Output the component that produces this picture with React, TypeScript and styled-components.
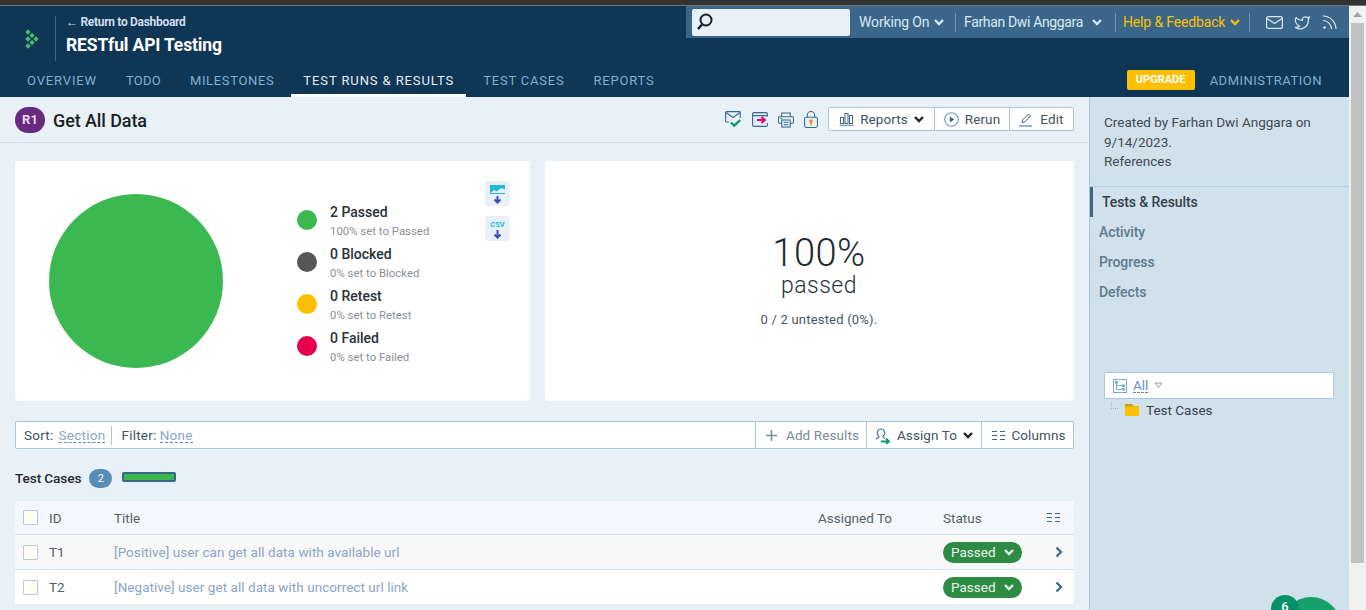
import React from "react";
import styled, { createGlobalStyle } from "styled-components";

const Global = createGlobalStyle`
  html, body { margin: 0; padding: 0; height: 100%; overflow: hidden; }
  body { font-family: Roboto, "Noto Sans", sans-serif; background: #e8f0f8; }
  * { box-sizing: border-box; }
`;

const Shell = styled.div`
  width: 1366px; height: 610px; overflow: hidden; position: relative;
  display: flex; flex-direction: column;
`;
const BrowserStrip = styled.div`
  height: 6px; flex: none; background: #333334; border-bottom: 1px solid #6c7278;
`;
const Viewport = styled.div`display: flex; flex: 1; min-height: 0;`;
const Page = styled.div`flex: 1; min-width: 0; display: flex; flex-direction: column;`;
const ScrollTrack = styled.div`
  width: 17px; flex: none; background: #f1f1f1; padding: 0 2px 47px;
  display: flex; flex-direction: column;
`;
const ScrollArrow = styled.div`height: 17px; flex: none; display: flex; align-items: center; justify-content: center;`;
const ScrollThumb = styled.div`flex: 1; background: #c1c1c1;`;

const Header = styled.header`
  height: 91px; flex: none; background: #0f3654; display: flex; flex-direction: column;
`;
const HeaderTop = styled.div`flex: 1; display: flex; justify-content: space-between; align-items: flex-start;`;
const Brand = styled.div`display: flex; align-items: center; padding: 10px 0 0 25px;`;
const BrandRule = styled.div`width: 1px; height: 45px; background: #3c6580; margin: 0 10px 0 16px;`;
const BrandText = styled.div`display: flex; flex-direction: column; gap: 6px; margin-top: -7px;`;
const BackLink = styled.div`font-size: 12px; font-weight: 700; letter-spacing: -0.3px; line-height: 14px; color: #cfdcec;`;
const Project = styled.div`font-size: 17.5px; font-weight: 700; letter-spacing: -0.15px; line-height: 20px; color: #fff;`;

const UtilityBar = styled.div`
  width: 663px; height: 32px; background: #3a6789; display: flex; align-items: center; padding: 0 0 0 6px;
`;
const SearchBox = styled.div`
  width: 158px; height: 27px; background: #e9f1f8; border-radius: 2px; display: flex; align-items: center; padding-left: 3px; margin-right: 9px; color: #15202b;
`;
const UtilLink = styled.div<{ $c?: string; $gap?: number; $w: number; $ls?: number }>`
  display: flex; align-items: center; gap: ${p => p.$gap ?? 5}px; width: ${p => p.$w}px; font-size: 14px; letter-spacing: ${p => p.$ls ?? -0.15}px;
  color: ${p => p.$c ?? "#dbe7f2"}; white-space: nowrap;
`;
const UtilRule = styled.div<{ $m: number }>`width: 1px; height: 19px; background: #6e93ae; margin: 0 ${p => p.$m}px 0 0;`;
const UtilIcons = styled.div`display: flex; align-items: center; gap: 11px; margin-left: 16px; color: #dbe7f2;`;

const NavRow = styled.nav`height: 35px; flex: none; display: flex; align-items: stretch; padding-left: 15px; gap: 5px;`;
const NavItem = styled.div<{ $active?: boolean; $ls: number }>`
  display: flex; align-items: center; padding: 4px 12px 0; font-size: 13px; letter-spacing: ${p => p.$ls}px;
  color: ${p => p.$active ? "#e6eef6" : "#82aed0"}; white-space: nowrap;
  border-bottom: 3px solid ${p => p.$active ? "#fff" : "transparent"};
`;
const NavRight = styled.div`margin-left: auto; display: flex; align-items: center; padding: 3px 27px 3px 0;`;
const Upgrade = styled.div`
  width: 68px; flex: none; height: 20px; background: #fcc000; border-radius: 2px; color: #fff; font-size: 11px; font-weight: 700;
  display: flex; align-items: center; justify-content: center; margin-right: 15px;
`;
const AdminLink = styled.div`font-size: 13px; letter-spacing: 0.5px; color: #82aed0; white-space: nowrap; padding-top: 2px;`;

const Body = styled.div`flex: 1; display: flex; min-height: 0;`;
const Content = styled.main`flex: 1; min-width: 0; background: #e8f0f8; display: flex; flex-direction: column;`;

const TitleBar = styled.div`
  height: 46px; flex: none; padding: 0 15px; display: flex; align-items: center; border-bottom: 1px solid #d0e0ec;
`;
const RunBadge = styled.div`
  width: 30px; height: 26px; border-radius: 13px; background: #682a7f; color: #e8dcee; font-size: 13px; font-weight: 700; display: flex; align-items: center; justify-content: center; margin-right: 8px;
`;
const RunTitle = styled.h1`margin: 1px 0 0; font-size: 18px; font-weight: 500; color: #1b1f24; letter-spacing: -0.1px;`;
const ActionIcons = styled.div`margin-left: auto; display: flex; align-items: center; gap: 10px; margin-right: 10px;`;

const ButtonGroup = styled.div`
  display: flex; background: #fff; border: 1px solid #a9c8e0; border-radius: 2px; height: 24px; margin-bottom: 1px;
`;
const GroupButton = styled.div<{ $w?: number; $muted?: boolean; $pl?: number; $gap?: number }>`
  display: flex; align-items: center; justify-content: center; gap: ${p => p.$gap ?? 6}px; font-size: 13.5px; letter-spacing: 0.1px;
  padding-left: ${p => p.$pl ?? 0}px;
  color: ${p => p.$muted ? "#7d8c99" : "#44525f"}; ${p => p.$w ? `width: ${p.$w}px;` : ""} white-space: nowrap;
  & + & { border-left: 1px solid #a9c8e0; }
`;

const Cards = styled.div`display: flex; gap: 15px; padding: 18px 15px 0; height: 258px; flex: none;`;
const ChartCard = styled.section`
  width: 515px; height: 240px; background: #fff; border-radius: 3px; display: flex; align-items: flex-start; padding: 20px 20px 0 34px;
`;
const Pie = styled.div`width: 174px; height: 174px; border-radius: 50%; background: #3cb850; margin: 13px 74px 0 0; flex: none;`;
const Legend = styled.div`display: flex; flex-direction: column; padding-top: 22px; flex: 1;`;
const LegendRow = styled.div`display: flex; align-items: flex-start; gap: 13px; height: 42px;`;
const Dot = styled.div<{ $c: string }>`width: 20px; height: 20px; border-radius: 50%; background: ${p => p.$c}; flex: none; margin-top: 7px;`;
const LegendText = styled.div`display: flex; flex-direction: column;`;
const LegendTitle = styled.div`font-size: 14px; font-weight: 500; color: #2a3037; line-height: 19px;`;
const LegendSub = styled.div`font-size: 11.4px; color: #8b8f95; line-height: 18px;`;
const Exports = styled.div`display: flex; flex-direction: column; gap: 10px;`;
const ExportBtn = styled.div`width: 25px; height: 25px; background: #e8f0f8; border-radius: 3px; display: flex;`;

const SummaryCard = styled.section`
  flex: 1; height: 240px; background: #fff; border-radius: 3px; display: flex; flex-direction: column; align-items: center; padding: 71px 0 0 19px;
`;
const Percent = styled.div`font-size: 38px; font-weight: 300; color: #1f2a33; line-height: 42px; letter-spacing: 0.5px;`;
const Passed = styled.div`font-size: 23px; font-weight: 300; color: #2b343c; line-height: 23px; letter-spacing: 0.5px;`;
const Untested = styled.div`font-size: 13px; color: #4a5560; line-height: 18px; margin-top: 14px; letter-spacing: 0.2px;`;

const Toolbar = styled.div`
  margin: 20px 15px 0; height: 28px; flex: none; background: #fff; border: 1px solid #a9c8e0; border-radius: 2px; display: flex; align-items: stretch;
  font-size: 13.5px; color: #44525f;
`;
const ToolFilters = styled.div`flex: 1; display: flex; align-items: center; padding-left: 8px; letter-spacing: 0.25px;`;
const ToolSep = styled.div`width: 1px; height: 19px; background: #a9c8e0; margin: 0 9px 0 6px;`;
const DashLink = styled.span<{ $c?: string; $ml?: number }>`
  color: ${p => p.$c ?? "#8aa6c8"}; border-bottom: 1px dashed #5a8bb5; margin-left: ${p => p.$ml ?? 5}px; line-height: 14px;
`;
const ToolButton = styled(GroupButton)`height: 100%; border-left: 1px solid #a9c8e0;`;

const SectionHead = styled.div`height: 52px; flex: none; margin: 0 15px; display: flex; align-items: center; padding-top: 6px;`;
const SectionTitle = styled.div`font-size: 13.6px; font-weight: 500; color: #1f2a33; letter-spacing: -0.1px;`;
const CountBadge = styled.div`
  width: 23px; height: 19px; border-radius: 10px; background: #568db5; color: #fff; font-size: 11px; display: flex; align-items: center; justify-content: center; margin: 0 10px 0 8px;
`;
const Progress = styled.div`width: 54px; height: 10px; background: #3cb850; border: 2px solid #3a6789; border-radius: 2px; margin-bottom: 2px;`;

const Table = styled.div`margin: 0 15px; border-radius: 3px; overflow: hidden; background: #fff; flex: none;`;
const Row = styled.div<{ $bg: string; $h: number }>`
  display: grid; grid-template-columns: 26px 65px 704px 125px 103px 1fr; align-items: center; height: ${p => p.$h}px;
  padding-left: 8px; background: ${p => p.$bg}; border-bottom: 1px solid #cfdfeb; font-size: 13.5px; color: #555f69;
  &:last-child { border-bottom: none; }
`;
const Check = styled.div`width: 15px; height: 15px; border: 1px solid #b6c6ea; background: #fffff2; border-radius: 1px;`;
const CaseLink = styled.div`color: #8aa6c8; white-space: nowrap; letter-spacing: 0.05px;`;
const Pill = styled.div`
  width: 79px; height: 21px; border-radius: 11px; background: #2e8b44; color: #e9f5ec; display: flex; align-items: center; gap: 8px; padding-left: 8px; font-size: 13.5px;
`;
const RowEnd = styled.div<{ $pl: number }>`padding-left: ${p => p.$pl}px; display: flex; align-items: center; color: #3a6789;`;

const Sidebar = styled.aside`
  width: 260px; flex: none; background: #d1e1ec; border-left: 1px solid #a9c8e0; display: flex; flex-direction: column; position: relative;
`;
const Meta = styled.div`
  height: 90px; flex: none; padding: 16px 14px 0 14px; font-size: 13.5px; line-height: 19.5px; color: #3f4a55; border-bottom: 1px solid #b4cde0;
`;
const SideNav = styled.div`display: flex; flex-direction: column;`;
const SideItem = styled.div<{ $active?: boolean }>`
  height: 30px; display: flex; align-items: center; font-size: 14px; font-weight: 500; letter-spacing: -0.1px;
  padding-left: 9px; color: ${p => p.$active ? "#33404c" : "#60798c"};
  border-left: ${p => p.$active ? "3px solid #3a6789" : "none"};
`;
const FilterBox = styled.div`
  margin: 65px 15px 0 14px; height: 27px; background: #fff; border: 1px solid #a9c8e0; border-radius: 1px;
  display: flex; align-items: center; padding-left: 8px; gap: 6px; font-size: 13.5px;
`;
const TreeRow = styled.div`display: flex; align-items: center; margin: 3px 0 0 21px; font-size: 13.5px; color: #36424d; gap: 7px;`;
const TreeElbow = styled.div`width: 7px; height: 7px; border-left: 1px dotted #a5b5c2; border-bottom: 1px dotted #a5b5c2; margin-top: -9px;`;

const ChatBubble = styled.div`
  position: absolute; left: 191px; top: 500px; width: 60px; height: 60px; border-radius: 50%; background: #17a06c;
`;
const ChatCount = styled.div`
  position: absolute; left: 181px; top: 498px; width: 28px; height: 28px; border-radius: 50%; background: #07916a; color: #fff; font-size: 13px; font-weight: 500; text-align: center; line-height: 23px;
`;

const Chevron = ({ c = "currentColor", s = 10, w = 2.4 }: { c?: string; s?: number; w?: number }) => (
  <svg width={s} height={s * 0.7} viewBox="0 0 10 7" fill="none" stroke={c} strokeWidth={w}><path d="M1 1l4 4 4-4" /></svg>
);
const Logo = () => (
  <svg width="14" height="20" viewBox="0 0 14 20" fill="#4fb872">
    {[[3, 3], [7, 6.5], [3, 10], [11, 10], [7, 13.5], [3, 17]].map(([x, y]) => (
      <path key={`${x}-${y}`} d={`M${x} ${y - 2.7}l2.700 2.700-2.700 2.700-2.700-2.700z`} />
    ))}
  </svg>
);
const SearchIcon = () => (
  <svg width="20" height="20" viewBox="0 0 20 20" fill="none" stroke="currentColor" strokeWidth="2"><circle cx="11" cy="8" r="5.500" /><path d="M7 12.500L3 17" strokeWidth="2.600" /></svg>
);
const MailIcon = () => (
  <svg width="17" height="13" viewBox="0 0 17 13" fill="none" stroke="currentColor" strokeWidth="1.200"><rect x=".6" y=".6" width="15.800" height="11.800" rx="2" /><path d="M1 2.500l7.500 5 7.500-5" /></svg>
);
const TwitterIcon = () => (
  <svg width="17" height="17" viewBox="0 0 24 24" fill="none" stroke="currentColor" strokeWidth="1.700" strokeLinejoin="round"><path d="M22 4s-.7 2.100-2 3.400c1.600 10-9.400 17.300-18 11.600 2.200.1 4.400-.6 6-2C3 15.500.5 9.600 3 5c2.200 2.600 5.600 4.100 9 4-.9-4.200 4-6.600 7-3.800 1.100 0 3-1.200 3-1.200z" /></svg>
);
const RssIcon = () => (
  <svg width="15" height="15" viewBox="0 0 15 15" fill="none" stroke="currentColor" strokeWidth="1.200"><path d="M1 5.500c4.500 0 8.500 4 8.500 8.500M1 1c7 0 13 6 13 13" /><circle cx="2.500" cy="12.500" r="1.300" fill="currentColor" stroke="none" /></svg>
);
const MailCheck = () => (
  <svg width="17" height="17" viewBox="0 0 17 17" fill="none"><path d="M4 11H1.500A.9.900 0 0 1 .6 10V1.500A.9.900 0 0 1 1.500.6h12.800a.9.900 0 0 1 .9.900V7" stroke="#3a6789" strokeWidth="1.100" /><path d="M1 1.500l7 5 7-5" stroke="#3a6789" strokeWidth="1.100" /><path d="M6 11.500l3.200 3.200 6-5.500" stroke="#0c9a6e" strokeWidth="2.400" /></svg>
);
const ExportIcon = () => (
  <svg width="16" height="15" viewBox="0 0 16 15" fill="none"><path d="M15.400 4.500V2A1.400 1.400 0 0 0 14 .6H2A1.400 1.400 0 0 0 .6 2v11A1.400 1.400 0 0 0 2 14.400h12a1.400 1.400 0 0 0 1.400-1.400v-2M.6 3.600h14.800" stroke="#3a6789" strokeWidth="1.100" /><path d="M5 8h8M9.500 5l3.500 3-3.500 3" stroke="#e6007e" strokeWidth="2" /></svg>
);
const PrintIcon = () => (
  <svg width="16" height="16" viewBox="0 0 17 17" fill="none" stroke="#3a6789" strokeWidth="1.100"><path d="M4 5V1h9v4M4 12H1.500A1 1 0 0 1 .6 11V6a1 1 0 0 1 1-1h13.800a1 1 0 0 1 1 1v5a1 1 0 0 1-1 1H13" /><rect x="4" y="8.500" width="9" height="7.500" /><path d="M6 11h5M6 13.500h5" /><path d="M2.500 7h2" stroke="#0c9a6e" /></svg>
);
const LockIcon = () => (
  <svg width="14" height="17" viewBox="0 0 15 18" fill="none"><rect x=".6" y="6.500" width="13.800" height="11" rx="2" stroke="#3a6789" strokeWidth="1.100" /><path d="M3.500 6.500V4.500a4 4 0 0 1 8 0v2" stroke="#3a6789" strokeWidth="1.100" /><circle cx="7.500" cy="10.500" r="1.900" fill="#f28a16" /><rect x="6.600" y="10.500" width="1.800" height="4.500" fill="#f28a16" /></svg>
);
const BarsIcon = () => (
  <svg width="15" height="14" viewBox="0 0 15 14" fill="none" stroke="#3a6789"><rect x="1.500" y="5.500" width="3" height="6" /><rect x="6" y="1.500" width="3" height="10" /><rect x="10.500" y="3.500" width="3" height="8" /><path d="M.5 13.500h14" stroke="#6d9cc0" strokeWidth="1.500" /></svg>
);
const PlayIcon = () => (
  <svg width="15" height="15" viewBox="0 0 15 15"><circle cx="7.500" cy="7.500" r="6.800" fill="none" stroke="#6d9cc0" strokeWidth="1.100" /><path d="M5.800 4.500l4.500 3-4.500 3z" fill="#3a6789" /></svg>
);
const EditIcon = () => (
  <svg width="15" height="15" viewBox="0 0 15 15" fill="none"><path d="M3 10.500l.5-2.500L9.500 2l2 2-6 6z" stroke="#3a6789" strokeWidth="1" /><path d="M0 14h13" stroke="#6d9cc0" strokeWidth="1.500" /></svg>
);
const ColumnsIcon = () => (
  <svg width="13" height="11" viewBox="0 0 13 11" stroke="#3a6789" strokeWidth="1"><path d="M0 1.500h5M0 5.500h5M0 9.500h5M8 1.500h5M8 5.500h5M8 9.500h5" /></svg>
);
const PlusIcon = () => (
  <svg width="11" height="11" viewBox="0 0 11 11" stroke="#7d8c99" strokeWidth="1.500"><path d="M5.500 0v11M0 5.500h11" /></svg>
);
const AssignIcon = () => (
  <svg width="16" height="17" viewBox="0 0 16 17" fill="none"><path d="M1 12c1-1 3-1 3-2.500C2 8 2 5.500 3 3.500 4 1.500 8 1.500 9 3.500c1 2 .8 4.500-1.200 6 0 1 1.200 1.500 2.200 2" stroke="#3a6789" strokeWidth="1.100" /><path d="M6 14.500h8M11 11.500l3 3-3 2.500" stroke="#0c9a6e" strokeWidth="1.800" /></svg>
);
const ChartExport = () => (
  <svg width="25" height="25" viewBox="0 0 25 25"><rect x="5" y="4" width="15" height="9" fill="#22b8d8" /><path d="M5.500 12l3.500-3 2.500 1.500L16 7l4 1.500V12z" fill="#e8f0f8" /><path d="M12.500 15v6M9.500 18.500l3 3 3-3" stroke="#3d4db0" strokeWidth="2" fill="none" /></svg>
);
const CsvExport = () => (
  <svg width="25" height="25" viewBox="0 0 25 25"><text x="12.500" y="11" fontSize="7.500" fontWeight="700" textAnchor="middle" fill="#22b8d8" fontFamily="Roboto">CSV</text><path d="M12.500 14v7M9.500 18.500l3 3 3-3" stroke="#3d4db0" strokeWidth="2" fill="none" /></svg>
);
const TreeIcon = () => (
  <svg width="14" height="14" viewBox="0 0 14 14" fill="none"><rect x=".5" y=".5" width="13" height="13" stroke="#7fa9c8" /><path d="M3.500 3v7.500H8M3.500 6.500H8" stroke="#7fa9c8" /><path d="M2 2h3v2.500H2zM8.500 5.500H12V8H8.500zM8.500 9H12v2.500H8.500z" fill="#7fa9c8" /></svg>
);
const FolderIcon = () => (
  <svg width="14" height="12" viewBox="0 0 14 12"><path d="M0 0h7l1.500 2H14v1H0z" fill="#c99f00" /><rect y="2.500" width="14" height="9.500" fill="#fcc000" /></svg>
);

const navItems = [
  { t: "OVERVIEW", ls: 0.85 },
  { t: "TODO", ls: 0.25 },
  { t: "MILESTONES", ls: 0.65 },
  { t: "TEST RUNS & RESULTS", ls: 0.9, active: true },
  { t: "TEST CASES", ls: 0.8 },
  { t: "REPORTS", ls: 0.8 },
];
const legend = [
  { c: "#3cb850", n: "2 Passed", s: "100% set to Passed" },
  { c: "#565656", n: "0 Blocked", s: "0% set to Blocked" },
  { c: "#fcc000", n: "0 Retest", s: "0% set to Retest" },
  { c: "#e6004c", n: "0 Failed", s: "0% set to Failed" },
];
const cases = [
  { id: "T1", t: "[Positive] user can get all data with available url", bg: "#f8f8f8", h: 35 },
  { id: "T2", t: "[Negative] user get all data with uncorrect url link", bg: "#fff", h: 34 },
];

export default function App() {
  return (
    <Shell>
      <Global />
      <BrowserStrip />
      <Viewport>
        <Page>
          <Header>
            <HeaderTop>
              <Brand>
                <Logo />
                <BrandRule />
                <BrandText>
                  <BackLink>← Return to Dashboard</BackLink>
                  <Project>RESTful API Testing</Project>
                </BrandText>
              </Brand>
              <UtilityBar>
                <SearchBox><SearchIcon /></SearchBox>
                <UtilLink $w={96}>Working On <Chevron /></UtilLink>
                <UtilRule $m={8} />
                <UtilLink $w={151} $gap={9} $ls={-0.35}>Farhan Dwi Anggara <Chevron /></UtilLink>
                <UtilRule $m={7} />
                <UtilLink $c="#fcc000" $w={126}>Help &amp; Feedback <Chevron /></UtilLink>
                <UtilRule $m={0} />
                <UtilIcons><MailIcon /><TwitterIcon /><RssIcon /></UtilIcons>
              </UtilityBar>
            </HeaderTop>
            <NavRow>
              {navItems.map(n => <NavItem key={n.t} $ls={n.ls} $active={n.active}>{n.t}</NavItem>)}
              <NavRight>
                <Upgrade>UPGRADE</Upgrade>
                <AdminLink>ADMINISTRATION</AdminLink>
              </NavRight>
            </NavRow>
          </Header>
          <Body>
            <Content>
              <TitleBar>
                <RunBadge>R1</RunBadge>
                <RunTitle>Get All Data</RunTitle>
                <ActionIcons><MailCheck /><ExportIcon /><PrintIcon /><LockIcon /></ActionIcons>
                <ButtonGroup>
                  <GroupButton $w={105}><BarsIcon />Reports <Chevron c="#222" /></GroupButton>
                  <GroupButton $w={75}><PlayIcon />Rerun</GroupButton>
                  <GroupButton $w={64}><EditIcon />Edit</GroupButton>
                </ButtonGroup>
              </TitleBar>
              <Cards>
                <ChartCard>
                  <Pie />
                  <Legend>
                    {legend.map(l => (
                      <LegendRow key={l.n}>
                        <Dot $c={l.c} />
                        <LegendText>
                          <LegendTitle>{l.n}</LegendTitle>
                          <LegendSub>{l.s}</LegendSub>
                        </LegendText>
                      </LegendRow>
                    ))}
                  </Legend>
                  <Exports>
                    <ExportBtn><ChartExport /></ExportBtn>
                    <ExportBtn><CsvExport /></ExportBtn>
                  </Exports>
                </ChartCard>
                <SummaryCard>
                  <Percent>100%</Percent>
                  <Passed>passed</Passed>
                  <Untested>0 / 2 untested (0%).</Untested>
                </SummaryCard>
              </Cards>
              <Toolbar>
                <ToolFilters>
                  Sort: <DashLink>Section</DashLink>
                  <ToolSep />
                  Filter: <DashLink $ml={3}>None</DashLink>
                </ToolFilters>
                <ToolButton $w={111} $muted $pl={3} $gap={9}><PlusIcon />Add Results</ToolButton>
                <ToolButton $w={115}><AssignIcon />Assign To <Chevron c="#222" /></ToolButton>
                <ToolButton $w={92} $pl={3}><ColumnsIcon />Columns</ToolButton>
              </Toolbar>
              <SectionHead>
                <SectionTitle>Test Cases</SectionTitle>
                <CountBadge>2</CountBadge>
                <Progress />
              </SectionHead>
              <Table>
                <Row $bg="#f4f7fc" $h={34}>
                  <Check />
                  <div>ID</div>
                  <div>Title</div>
                  <div>Assigned To</div>
                  <div>Status</div>
                  <RowEnd $pl={1}><ColumnsIcon /></RowEnd>
                </Row>
                {cases.map(c => (
                  <Row key={c.id} $bg={c.bg} $h={c.h}>
                    <Check />
                    <div>{c.id}</div>
                    <CaseLink>{c.t}</CaseLink>
                    <div />
                    <Pill>Passed <Chevron c="#e9f5ec" /></Pill>
                    <RowEnd $pl={9}>
                      <svg width="8" height="12" viewBox="0 0 8 12" fill="none" stroke="currentColor" strokeWidth="2.200"><path d="M1.500 1.500L6 6l-4.500 4.500" /></svg>
                    </RowEnd>
                  </Row>
                ))}
              </Table>
            </Content>
            <Sidebar>
              <Meta>
                Created by Farhan Dwi Anggara on 9/14/2023.<br />References
              </Meta>
              <SideNav>
                <SideItem $active>Tests &amp; Results</SideItem>
                <SideItem>Activity</SideItem>
                <SideItem>Progress</SideItem>
                <SideItem>Defects</SideItem>
              </SideNav>
              <FilterBox>
                <TreeIcon />
                <DashLink $c="#5a93c0" $ml={0}>All</DashLink>
                <svg width="9" height="7" viewBox="0 0 9 7" fill="none" stroke="#9a9a9a"><path d="M1 1h7L4.500 5.500z" /></svg>
              </FilterBox>
              <TreeRow>
                <TreeElbow />
                <FolderIcon />
                Test Cases
              </TreeRow>
              <ChatBubble />
              <ChatCount>6</ChatCount>
            </Sidebar>
          </Body>
        </Page>
        <ScrollTrack>
          <ScrollArrow>
            <svg width="9" height="5" viewBox="0 0 9 5" fill="#a3a3a3"><path d="M4.500 0L9 5H0z" /></svg>
          </ScrollArrow>
          <ScrollThumb />
        </ScrollTrack>
      </Viewport>
    </Shell>
  );
}
